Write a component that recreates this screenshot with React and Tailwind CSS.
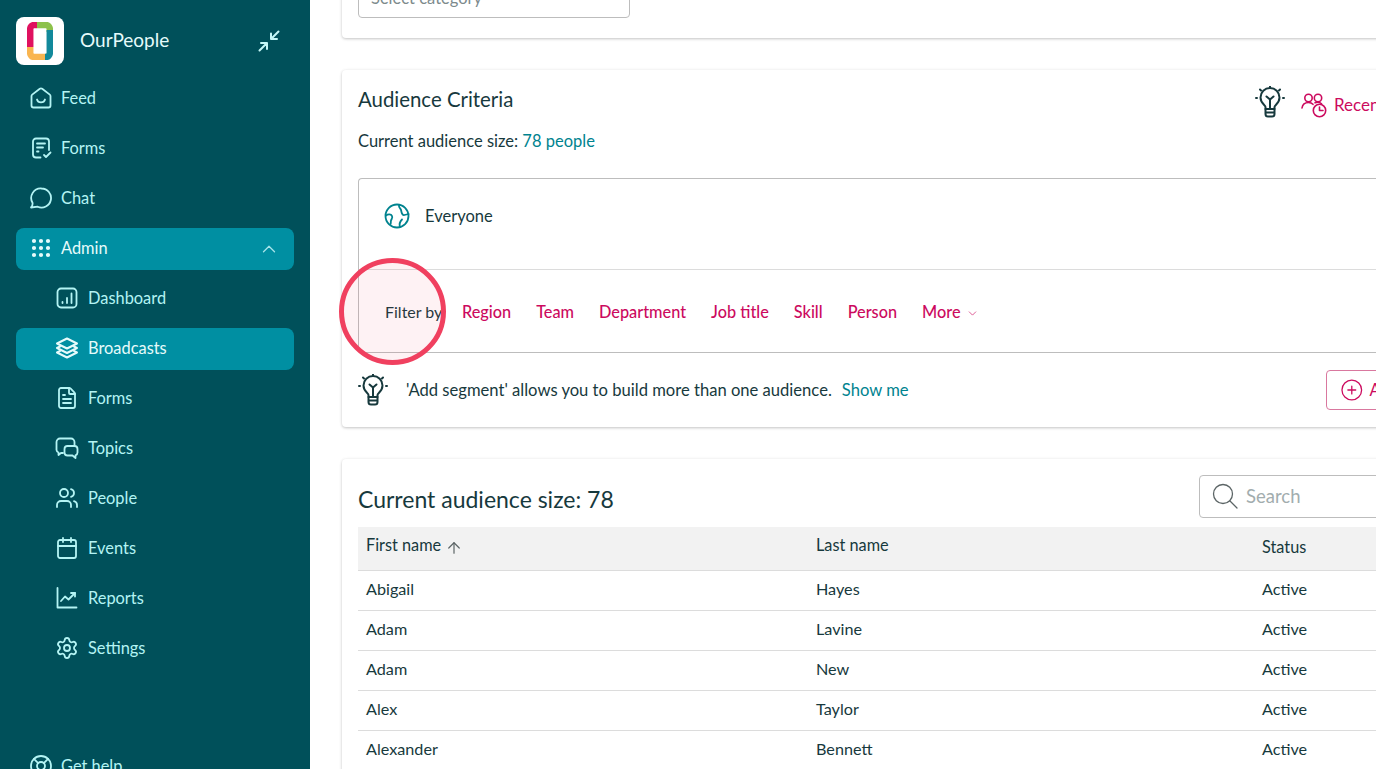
import {
  Grip,
  ChevronUp,
  ChevronDown,
  FileText,
  Users,
  Calendar,
  Settings,
  LifeBuoy,
  ArrowUp,
  CirclePlus,
} from 'lucide-react'

function Svg({ size = 24, children, className = '', sw = 1.8 }) {
  return (
    <svg
      width={size}
      height={size}
      viewBox="0 0 24 24"
      fill="none"
      stroke="currentColor"
      strokeWidth={sw}
      strokeLinecap="round"
      strokeLinejoin="round"
      className={`shrink-0 ${className}`}
    >
      {children}
    </svg>
  )
}

const FeedIcon = () => (
  <Svg>
    <path d="M10.800 2.800 3.200 8.600A2 2 0 0 0 2.500 10v9.500a2 2 0 0 0 2 2h15a2 2 0 0 0 2-2V10a2 2 0 0 0-.7-1.400l-7.600-5.800a2 2 0 0 0-2.400 0Z" />
    <path d="M8 13.500c1 3.800 7 3.800 8 0" />
  </Svg>
)
const FormCheckIcon = () => (
  <Svg>
    <path d="M11.500 21.500H7a3 3 0 0 1-3-3v-13a3 3 0 0 1 3-3h10a3 3 0 0 1 3 3V14" />
    <path d="M8 7.500h8M8 11.500h6M8 15.500h1.500" />
    <path d="m15 19 2 2 4.500-4.500" />
  </Svg>
)
const ChatIcon = () => (
  <Svg>
    <path d="M12.500 2.500a9.500 9.500 0 1 1-3.800 18.200L2 21.500c1.500-1.500 1.800-3 1.500-4.800A9.500 9.500 0 0 1 12.500 2.500Z" />
  </Svg>
)
const DashboardIcon = () => (
  <Svg>
    <rect x="2.500" y="2.500" width="19" height="19" rx="3.500" />
    <path d="M7.500 17v-1M12 17v-5M16.500 17V7.500" />
  </Svg>
)
const LayersIcon = () => (
  <Svg sw={2}>
    <path d="M12 2.500 22 7.500l-10 5-10-5Z" />
    <path d="m5 10.500-3 1.500 10 5 10-5-3-1.500" />
    <path d="m5 15-3 1.500 10 5 10-5L19 15" />
  </Svg>
)
const TopicsIcon = () => (
  <Svg>
    <path d="M8 17H6l-2.500 2v-2.500A3 3 0 0 1 1.500 14V6a3.500 3.500 0 0 1 3.500-3.500h11A3.500 3.500 0 0 1 19.500 6v3" />
    <path d="M12.500 10h7a3 3 0 0 1 3 3v3.500a3 3 0 0 1-2 2.800V22l-3-2.500h-5a3 3 0 0 1-3-3V13a3 3 0 0 1 3-3Z" />
  </Svg>
)
const ReportsIcon = () => (
  <Svg>
    <path d="M2.500 2v19.500h19" />
    <path d="m6 15 4-4.500 3.500 3L20 7" />
    <path d="M16 7h4v3.500" />
  </Svg>
)
const CollapseIcon = () => (
  <Svg sw={2}>
    <path d="M21.500 2.500 14 10M14 4.500V10h6" />
    <path d="M2.500 21.500 10 14M4 14h6v6" />
  </Svg>
)
const BulbIcon = () => (
  <svg
    width="30"
    height="32"
    viewBox="0 0 30 32"
    fill="none"
    stroke="currentColor"
    strokeWidth="2"
    strokeLinecap="round"
    strokeLinejoin="round"
    className="shrink-0"
  >
    <path d="M10.500 23v-2c0-2-5-3.500-5-9.500a9.500 9.500 0 0 1 19 0c0 6-5 7.500-5 9.500v2Z" />
    <path d="M10.500 23v5a2.500 2.500 0 0 0 2.500 2.500h4a2.500 2.500 0 0 0 2.500-2.500v-5M10.500 26.500h9" />
    <path d="M15 22V13M11.500 10.500 15 13.500l3.500-3" />
    <path d="M15 .5v.5M5 3.500l1 1M25 3.500l-1 1M1 12h1M28 12h1" />
  </svg>
)
const RecentIcon = () => (
  <svg
    width="26"
    height="26"
    viewBox="0 0 26 26"
    fill="none"
    stroke="currentColor"
    strokeWidth="1.600"
    strokeLinecap="round"
    strokeLinejoin="round"
    className="shrink-0"
  >
    <circle cx="7.500" cy="6" r="3.700" />
    <circle cx="17" cy="6" r="3.700" />
    <path d="M1 16c.5-3.500 3-5.500 6.500-5.500 2 0 3.500.7 4.500 1.800" />
    <path d="M14 10.800c2-.7 5-.6 6.500 1" />
    <circle cx="18.500" cy="18.500" r="6.200" />
    <path d="M18.500 15v3.500H22" />
  </svg>
)
const EarthIcon = () => (
  <svg
    width="26"
    height="26"
    viewBox="0 0 26 26"
    fill="none"
    stroke="currentColor"
    strokeWidth="1.800"
    strokeLinecap="round"
    strokeLinejoin="round"
    className="shrink-0"
  >
    <circle cx="13" cy="13" r="11.500" />
    <path d="M2 12.500c2-1.500 5-1.500 6 .5 1 1.500-.5 3-1 4.500s.2 2.500-.5 3.500" />
    <path d="M15 2c-.5 2 .5 3 1.500 4s.5 2.500 1.500 4.500 1.500 2 6.500 .5" />
    <path d="M16 24c-1-3 .5-6 2-7.500" />
  </svg>
)
const SearchIcon = () => (
  <svg width="26" height="26" viewBox="0 0 26 26" fill="none" stroke="currentColor" strokeWidth="1.300" strokeLinecap="round" className="shrink-0">
    <circle cx="11" cy="11" r="9.500" />
    <path d="m18 18 7 7" />
  </svg>
)

function Logo() {
  return (
    <div className="w-12 h-12 bg-white rounded-lg flex items-center justify-center shrink-0">
      <svg width="26" height="38" viewBox="0 0 26 38" fill="none" strokeWidth="6.500" strokeLinecap="butt">
        <path d="M3.200 25V7a4 4 0 0 1 4-4H10" stroke="#e0115f" />
        <path d="M3.200 25v6a4 4 0 0 0 4 4H20" stroke="#f9b550" />
        <path d="M10 3h9a4 4 0 0 1 3.800 4v3" stroke="#8dc24b" />
        <path d="M22.800 8v23a4 4 0 0 1-4 4H18" stroke="#12899b" />
      </svg>
    </div>
  )
}

const topItems = [
  { label: 'Feed', icon: <FeedIcon /> },
  { label: 'Forms', icon: <FormCheckIcon /> },
  { label: 'Chat', icon: <ChatIcon /> },
]

const adminItems = [
  { label: 'Dashboard', icon: <DashboardIcon /> },
  { label: 'Broadcasts', icon: <LayersIcon />, active: true },
  { label: 'Forms', icon: <FileText size={24} strokeWidth={1.8} /> },
  { label: 'Topics', icon: <TopicsIcon /> },
  { label: 'People', icon: <Users size={24} strokeWidth={1.8} /> },
  { label: 'Events', icon: <Calendar size={24} strokeWidth={1.8} /> },
  { label: 'Reports', icon: <ReportsIcon /> },
  { label: 'Settings', icon: <Settings size={24} strokeWidth={1.8} /> },
]

const filters = ['Region', 'Team', 'Department', 'Job title', 'Skill', 'Person']

const rows = [
  ['Abigail', 'Hayes'],
  ['Adam', 'Lavine'],
  ['Adam', 'New'],
  ['Alex', 'Taylor'],
  ['Alexander', 'Bennett'],
]

function Sidebar() {
  return (
    <aside className="w-[310px] shrink-0 bg-[#00505a] flex flex-col px-4 text-[#b4f4f4] text-[16.400px]">
      <div className="h-[48px] mt-[17px] mb-[13px] flex items-center shrink-0">
        <Logo />
        <span className="ml-4 pb-[2px] text-[19px] text-[#e6fbfb] flex-1">OurPeople</span>
        <div className="mr-[13px] text-[#c4f7f7]">
          <CollapseIcon />
        </div>
      </div>
      <nav className="flex flex-col gap-2">
        {topItems.map((item) => (
          <div key={item.label} className="h-[42px] flex items-center gap-2 pl-[13px] pb-[2px]">
            {item.icon}
            <span>{item.label}</span>
          </div>
        ))}
        <div className="h-[42px] flex items-center gap-2 pl-[13px] pr-4 pb-[2px] bg-[#008fa2] rounded-lg text-[#e6fbfb]">
          <Grip size={24} strokeWidth={2.200} />
          <span className="flex-1">Admin</span>
          <ChevronUp size={22} strokeWidth={1.400} className="text-[#a6e4ea] -mr-[2px] mt-[2px]" />
        </div>
        {adminItems.map((item) => (
          <div
            key={item.label}
            className={`h-[42px] flex items-center gap-[9px] pl-[39px] pb-[2px] rounded-lg ${
              item.active ? 'bg-[#008fa2] text-[#e6fbfb]' : ''
            }`}
          >
            {item.icon}
            <span>{item.label}</span>
          </div>
        ))}
      </nav>
      <div className="mt-[75px] h-[42px] flex items-center gap-2 pl-[13px] shrink-0">
        <LifeBuoy size={24} strokeWidth={1.800} />
        <span>Get help</span>
      </div>
    </aside>
  )
}

function Card({ children, className = '' }) {
  return (
    <section className={`w-[1140px] shrink-0 bg-white px-4 rounded-sm shadow-[0_1px_3px_rgba(0,0,0,0.22),0_0_4px_rgba(0,0,0,0.03)] ${className}`}>
      {children}
    </section>
  )
}

export default function App() {
  return (
    <div className="relative flex h-screen overflow-hidden bg-white font-['Lato',sans-serif] text-[#17393d]">
      <Sidebar />
      <main className="flex-1 min-w-0 overflow-hidden pl-8 flex flex-col gap-[32px] -mt-[30px]">
        <Card className="h-[68px] pt-[8px]">
          <div className="w-[272px] h-[40px] border border-[#bdbdbd] rounded flex items-center px-3 text-[#7d8a8c] text-[16.500px]">
            Select category
          </div>
        </Card>

        <Card className="h-[357px] flex flex-col">
          <div className="flex items-center justify-between mt-[14px] h-[30px]">
            <h2 className="text-[20.400px]">Audience Criteria</h2>
            <div className="w-[211px] mt-[6px] flex items-center gap-[16px] text-[#cc0a5e] text-[17px] shrink-0">
              <span className="text-[#17393d]">
                <BulbIcon />
              </span>
              <span className="flex items-center gap-[7px] mt-[5px] whitespace-nowrap">
                <RecentIcon />
                Recent audiences
              </span>
            </div>
          </div>
          <p className="text-[16.500px] mt-[15px] leading-6">
            Current audience size: <span className="text-[#00838f]">78 people</span>
          </p>
          <div className="mt-[25px] h-[175px] border border-r-0 border-[#bdbdbd] rounded-l flex flex-col">
            <div className="h-[91px] flex items-center gap-[15px] pl-[25px] pb-[16px] border-b border-[#dcdcdc]">
              <span className="text-[#00838f]">
                <EarthIcon />
              </span>
              <span className="text-[16.500px]">Everyone</span>
            </div>
            <div className="flex-1 flex items-center pl-[26px] pt-[1px] text-[16px]">
              <span className="w-[77px]">Filter by</span>
              <div className="flex items-center gap-[25px] mt-[1px] text-[#cc0a5e] font-medium text-[16.300px]">
                {filters.map((f) => (
                  <span key={f}>{f}</span>
                ))}
                <span className="flex items-center gap-[5px]">
                  More
                  <ChevronDown size={13} strokeWidth={1.200} className="mt-[3px]" />
                </span>
              </div>
            </div>
          </div>
          <div className="flex-1 flex items-center justify-between">
            <div className="flex items-center gap-[18px] text-[16.600px]">
              <BulbIcon />
              <span className="whitespace-nowrap">
                'Add segment' allows you to build more than one audience.
                <span className="ml-[10px] text-[#00838f]">Show me</span>
              </span>
            </div>
            <div className="w-[140px] h-[40px] shrink-0 border border-[#d9789f] rounded flex items-center gap-[6px] pl-[13px] text-[#cc0a5e] text-[16.500px] whitespace-nowrap">
              <CirclePlus size={28} strokeWidth={1.300} />
              Add segment
            </div>
          </div>
        </Card>

        <Card className="h-[340px]">
          <div className="flex items-center justify-between h-[68px] pt-[12px]">
            <h2 className="text-[23px]">Current audience size: 78</h2>
            <div className="w-[267px] h-[43px] -mt-[6px] shrink-0 border border-[#bdbdbd] rounded flex items-center gap-2 pl-[12px] text-[#a2adae] text-[18.500px]">
              <span className="text-[#5c6566]">
                <SearchIcon />
              </span>
              <span className="pt-[2px]">Search</span>
            </div>
          </div>
          <div className="grid grid-cols-[450px_446px_1fr] h-[44px] items-center bg-[#f2f2f2] border-b border-[#dcdcdc] px-2 pb-[6px] text-[16.300px]">
            <span className="flex items-center gap-[4px]">
              First name
              <ArrowUp size={18} strokeWidth={1.600} className="text-[#5c6566] mt-[5px]" />
            </span>
            <span>Last name</span>
            <span className="mt-[3px]">Status</span>
          </div>
          {rows.map((r, i) => (
            <div key={i} className="grid grid-cols-[450px_446px_1fr] h-[40px] items-center border-b border-[#dcdcdc] px-2 pb-[2px] text-[16.200px]">
              <span>{r[0]}</span>
              <span>{r[1]}</span>
              <span>Active</span>
            </div>
          ))}
        </Card>
      </main>
      {/* click marker from the screen recording */}
      <div className="absolute left-[339px] top-[258px] w-[107px] h-[107px] rounded-full border-[5px] border-[#f0405f] bg-[#f0405f]/[0.07] pointer-events-none" />
    </div>
  )
}
